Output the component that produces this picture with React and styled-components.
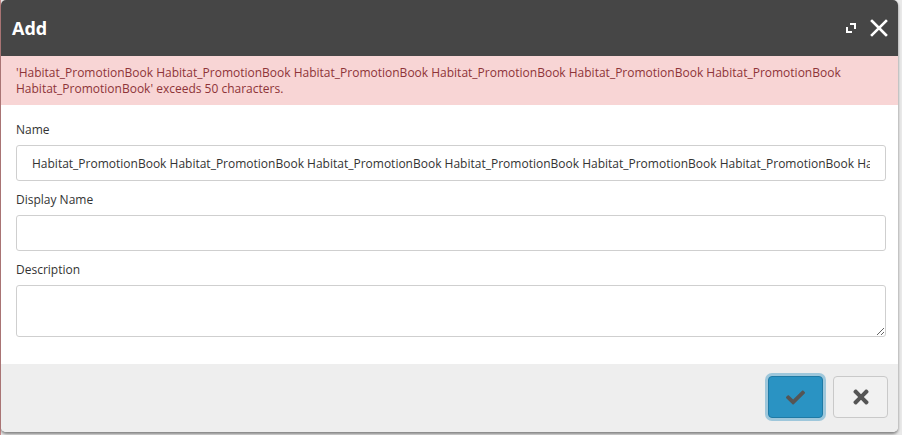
import styled, { createGlobalStyle } from "styled-components";
import { FaCheck, FaTimes } from "react-icons/fa";

const GlobalStyle = createGlobalStyle`
  html, body {
    margin: 0;
    padding: 0;
    background: #7a7a7a;
    font-family: "Open Sans", "Noto Sans", sans-serif;
  }
`;

const Backdrop = styled.div`
  width: 902px;
  height: 435px;
  background: linear-gradient(to right, #c98a8a 0, #c98a8a 1px, #e9e9e9 1px);
  overflow: hidden;
`;

const Dialog = styled.div`
  margin-left: 1px;
  width: 897px;
  height: 432px;
  display: flex;
  flex-direction: column;
  border-radius: 5px;
  overflow: hidden;
  background: #fff;
  box-shadow: 0 2px 3px rgba(0, 0, 0, 0.45);
`;

const Header = styled.div`
  height: 56px;
  flex: none;
  background: #464646;
  display: flex;
  align-items: center;
  padding: 0 10px 0 11px;
`;

const Title = styled.h1`
  margin: 0;
  flex: 1;
  font-size: 18px;
  font-weight: 700;
  color: #fff;
  padding-bottom: 1px;
`;

const HeaderButton = styled.button`
  border: 0;
  background: none;
  padding: 0;
  margin-left: ${(p) => p.$gap || 0}px;
  display: flex;
  align-items: center;
  cursor: pointer;
`;

const Alert = styled.div`
  flex: none;
  background: #f8d5d5;
  color: #8e3438;
  font-size: 12px;
  line-height: 16px;
  padding: 9px 15px 8px;
`;

const Body = styled.div`
  flex: 1;
  padding: 16px 12px 0 15px;
  display: flex;
  flex-direction: column;
`;

const Field = styled.div`
  display: flex;
  flex-direction: column;
  margin-bottom: 10px;
`;

const Label = styled.label`
  font-size: 12px;
  line-height: 18px;
  color: #333;
  margin-bottom: 6px;
`;

const Input = styled.input`
  box-sizing: border-box;
  height: 36px;
  border: 1px solid #cfcfcf;
  border-radius: 3px;
  padding: 0 15px;
  font-family: inherit;
  font-size: 12px;
  color: #333;
  outline: none;
  background: #fff;
`;

const TextArea = styled.textarea`
  box-sizing: border-box;
  height: 52px;
  border: 1px solid #cfcfcf;
  border-radius: 3px;
  padding: 6px 15px;
  font-family: inherit;
  font-size: 12px;
  color: #333;
  outline: none;
  resize: vertical;
`;

const Footer = styled.div`
  flex: none;
  height: 68px;
  box-sizing: border-box;
  background: #eeeeee;
  display: flex;
  justify-content: flex-end;
  align-items: center;
  gap: 10px;
  padding: 0 10px 2px 0;
`;

const ActionButton = styled.button`
  box-sizing: border-box;
  width: 55px;
  height: 42px;
  border-radius: 4px;
  display: flex;
  align-items: center;
  justify-content: center;
  color: #555;
  cursor: pointer;
  border: 1px solid ${(p) => (p.$primary ? "#1e7aa5" : "#c9c9c9")};
  background: ${(p) => (p.$primary ? "#2a93c3" : "#f1f1f1")};
  box-shadow: ${(p) =>
    p.$primary ? "0 0 0 3px rgba(60, 150, 195, 0.45)" : "none"};
`;

const ExpandIcon = () => (
  <svg width="12" height="12" viewBox="0 0 12 12">
    <path
      d="M6 2h4v4M2 6v4h4"
      fill="none"
      stroke="#fff"
      strokeWidth="2"
      strokeLinecap="square"
    />
  </svg>
);

const CloseIcon = () => (
  <svg width="18" height="18" viewBox="0 0 18 18">
    <path
      d="M2 2L16 16M16 2L2 16"
      stroke="#fff"
      strokeWidth="2.6"
      strokeLinecap="square"
    />
  </svg>
);

const word = "Habitat_PromotionBook";
const longName = Array(7).fill(word).join(" ");

export default function App() {
  return (
    <>
      <GlobalStyle />
      <Backdrop>
        <Dialog>
          <Header>
            <Title>Add</Title>
            <HeaderButton>
              <ExpandIcon />
            </HeaderButton>
            <HeaderButton $gap={13}>
              <CloseIcon />
            </HeaderButton>
          </Header>
          <Alert>'{longName}' exceeds 50 characters.</Alert>
          <Body>
            <Field>
              <Label>Name</Label>
              <Input defaultValue={longName} />
            </Field>
            <Field>
              <Label>Display Name</Label>
              <Input />
            </Field>
            <Field>
              <Label>Description</Label>
              <TextArea />
            </Field>
          </Body>
          <Footer>
            <ActionButton $primary>
              <FaCheck size={19} />
            </ActionButton>
            <ActionButton>
              <FaTimes size={22} />
            </ActionButton>
          </Footer>
        </Dialog>
      </Backdrop>
    </>
  );
}
